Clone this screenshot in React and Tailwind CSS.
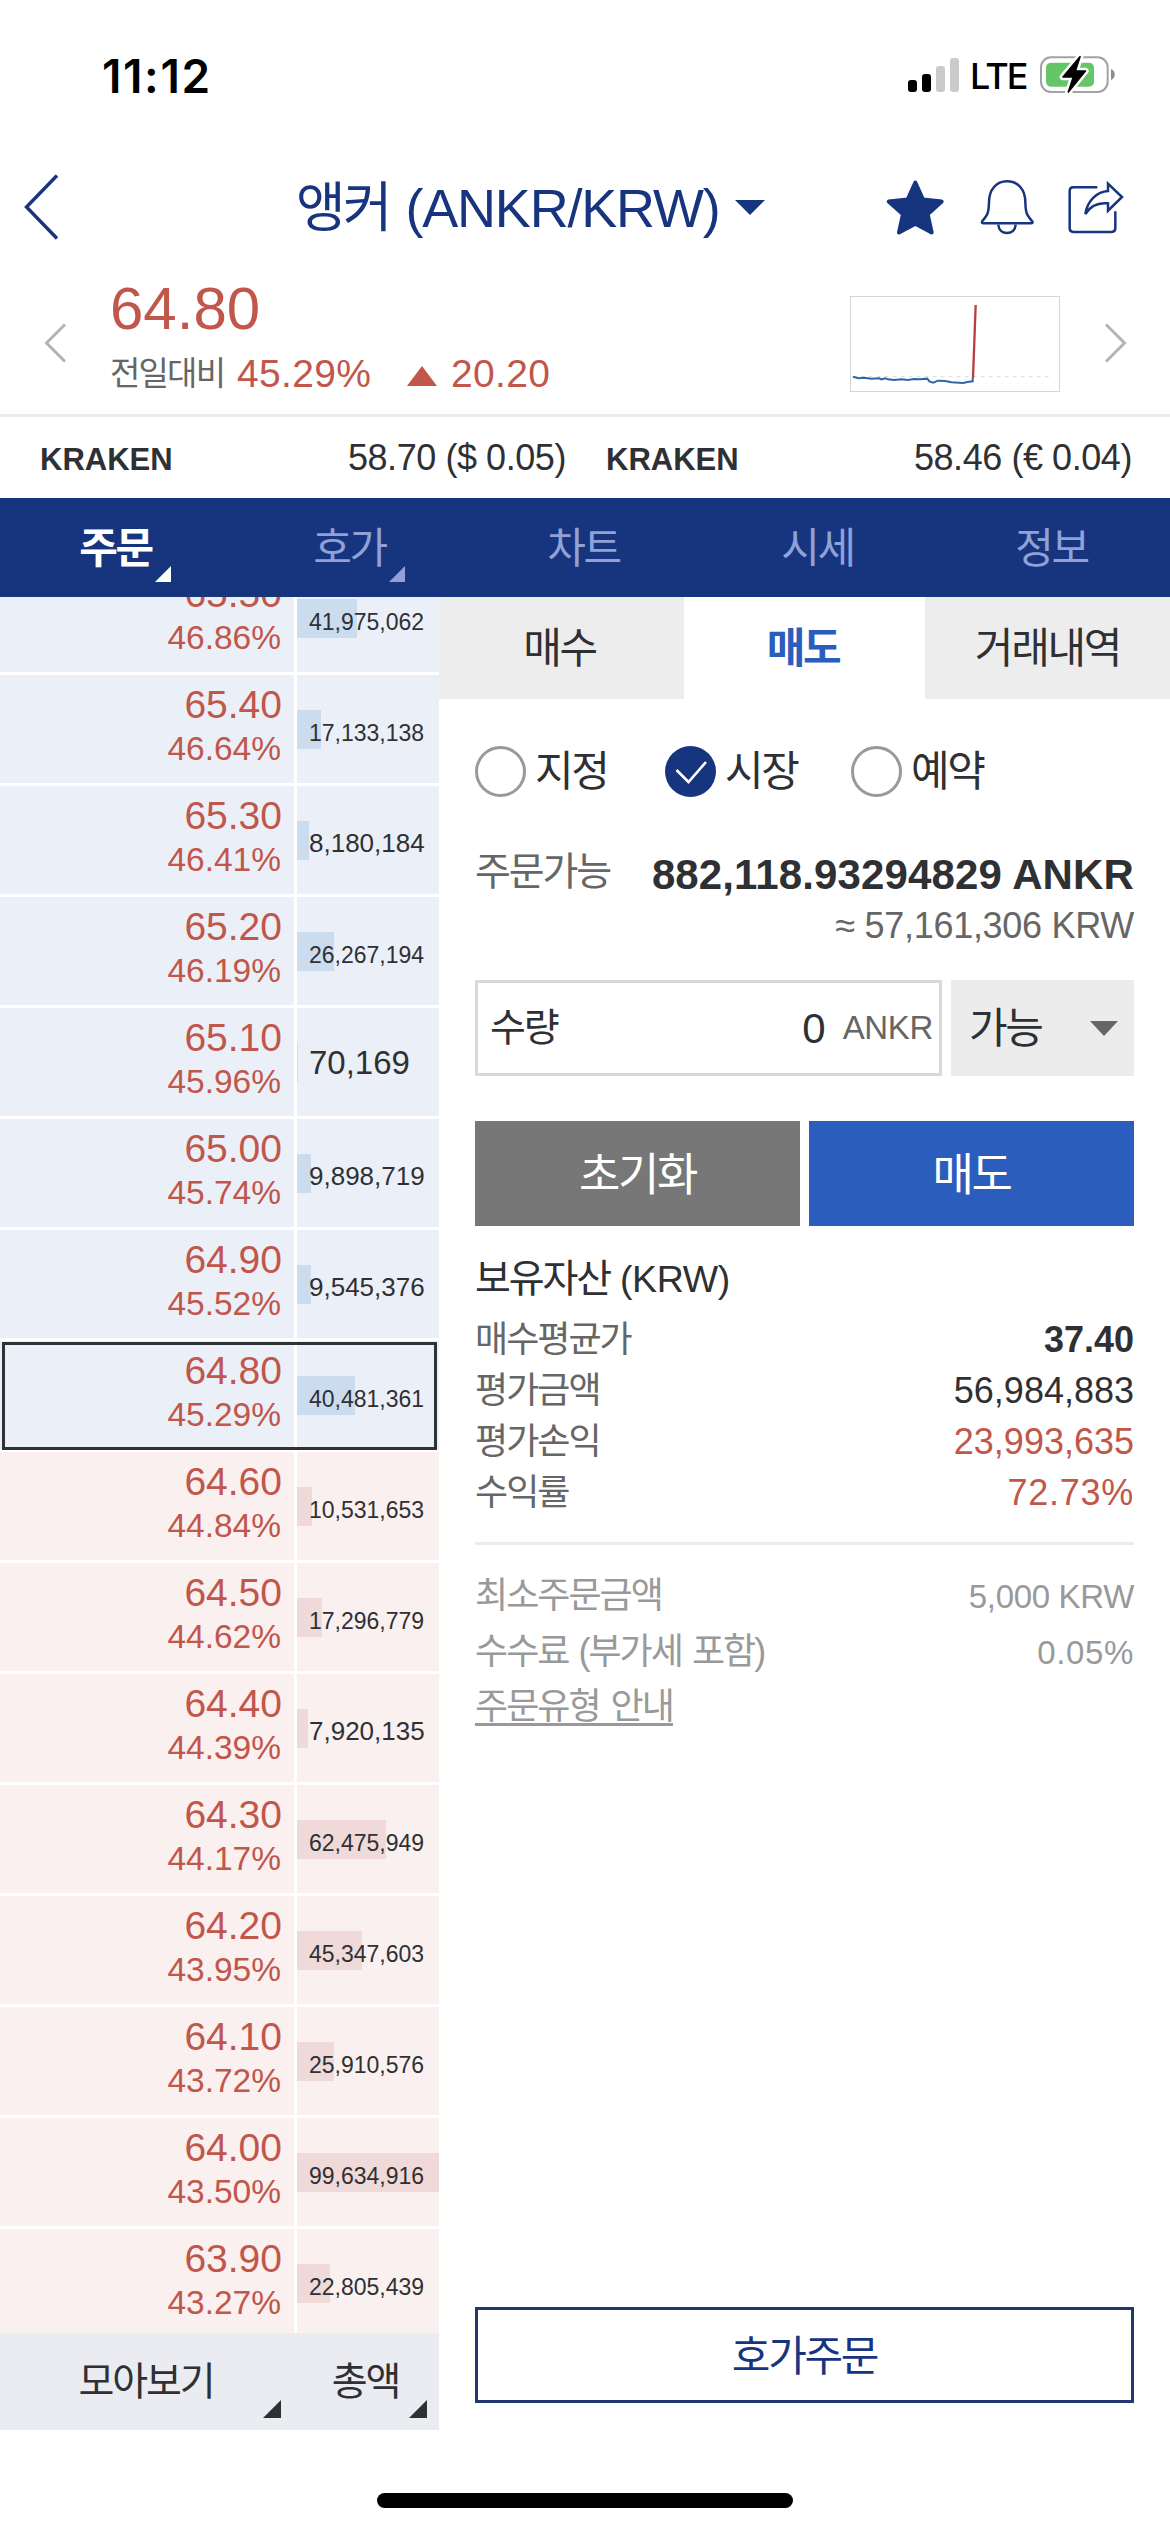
import React from 'react';
import clsx from 'clsx';

const MAX_VOLUME = 99634916;

const orders = [
  { price: '65.50', rate: '46.86%', volume: 41975062, side: 'ask' },
  { price: '65.40', rate: '46.64%', volume: 17133138, side: 'ask' },
  { price: '65.30', rate: '46.41%', volume: 8180184, side: 'ask' },
  { price: '65.20', rate: '46.19%', volume: 26267194, side: 'ask' },
  { price: '65.10', rate: '45.96%', volume: 70169, side: 'ask' },
  { price: '65.00', rate: '45.74%', volume: 9898719, side: 'ask' },
  { price: '64.90', rate: '45.52%', volume: 9545376, side: 'ask' },
  { price: '64.80', rate: '45.29%', volume: 40481361, side: 'ask', current: true },
  { price: '64.60', rate: '44.84%', volume: 10531653, side: 'bid' },
  { price: '64.50', rate: '44.62%', volume: 17296779, side: 'bid' },
  { price: '64.40', rate: '44.39%', volume: 7920135, side: 'bid' },
  { price: '64.30', rate: '44.17%', volume: 62475949, side: 'bid' },
  { price: '64.20', rate: '43.95%', volume: 45347603, side: 'bid' },
  { price: '64.10', rate: '43.72%', volume: 25910576, side: 'bid' },
  { price: '64.00', rate: '43.50%', volume: 99634916, side: 'bid' },
  { price: '63.90', rate: '43.27%', volume: 22805439, side: 'bid' },
];

const navTabs = [
  { label: '주문', active: true, menu: true },
  { label: '호가', menu: true },
  { label: '차트' },
  { label: '시세' },
  { label: '정보' },
];

const assets = [
  { label: '매수평균가', value: '37.40', style: 'font-bold' },
  { label: '평가금액', value: '56,984,883', style: '' },
  { label: '평가손익', value: '23,993,635', style: 'text-[#c1564b]' },
  { label: '수익률', value: '72.73%', style: 'text-[#c1564b] tracking-[0.02em]' },
];

// Hangul is set a little tighter than the latin text
const Ko = ({ className, children }) => (
  <span className={clsx('tracking-[-0.055em]', className)}>{children}</span>
);

const Corner = ({ className }) => (
  <svg viewBox="0 0 18 18" className={clsx('absolute', className)} fill="currentColor">
    <path d="M18 0V18H0Z" />
  </svg>
);

const StatusBar = () => (
  <div className="flex h-[144px] items-center pt-1 pr-[54px] pl-[102px] font-[Inter,sans-serif] text-black">
    <span className="mt-1 text-[46px] font-semibold tracking-[0.035em]">11:12</span>
    <svg viewBox="0 0 51 34" className="mt-px ml-auto h-[34px] w-[51px]">
      <rect x="0" y="22" width="9" height="12" rx="3" />
      <rect x="14" y="16" width="9" height="18" rx="3" />
      <rect x="28" y="8" width="9" height="26" rx="3" fill="#cacaca" />
      <rect x="42" y="0" width="9" height="34" rx="3" fill="#cacaca" />
    </svg>
    <span className="mt-1 ml-[11px] w-[57px] text-[36px] font-medium tracking-[-0.05em]">LTE</span>
    <svg viewBox="597 73 231 117" className="ml-3 h-[39px] w-[77px]">
      <rect x="603" y="80" width="200" height="104" rx="30" fill="none" stroke="#a2a2a2" strokeWidth="6" />
      <path d="M813 115C828 120 828 143 813 148Z" fill="#8c8c8c" />
      <rect x="618" y="96" width="144" height="72" rx="15" fill="#65c667" />
      <path d="M720 78L669 139H700L685 184L736 121H706Z" fill="#fff" stroke="#fff" strokeWidth="20" strokeLinejoin="round" />
      <path d="M720 78L669 139H700L685 184L736 121H706Z" stroke="#000" strokeWidth="5" strokeLinejoin="round" />
    </svg>
  </div>
);

const Header = () => (
  <div className="flex h-[126px] items-center pr-[46px] text-[#17347f]">
    <svg viewBox="0 0 36 66" className="ml-[23px] h-[66px] w-[36px]" fill="none" stroke="currentColor" strokeWidth="3.4">
      <path d="M34 1.500L3.500 33L34 64.500" />
    </svg>
    <div className="mt-[2px] ml-[237px] flex w-[425px] items-baseline text-[54px] leading-[60px] whitespace-nowrap">
      <Ko>앵커</Ko>
      <span className="ml-[16px] tracking-[-1.200px]">(ANKR/KRW)</span>
    </div>
    <svg viewBox="0 0 30 15" className="ml-[14px] h-[15px] w-[30px]" fill="currentColor">
      <path d="M0 0H30L15 15Z" />
    </svg>
    <svg viewBox="130 440 180 170" className="ml-auto h-[57px] w-[60px]" fill="currentColor" stroke="currentColor" strokeWidth="12" strokeLinejoin="round">
      <path d="M221 450L244 501L300 507L258 545L270 600L221 574L172 600L184 545L141 507L198 501Z" />
    </svg>
    <svg viewBox="416 445 162 168" className="ml-[35px] h-[56px] w-[54px]" fill="none" stroke="currentColor" strokeWidth="7.5" strokeLinejoin="round">
      <path d="M423 571C440 552 442 545 443 515C443 476 465 452 497 452C530 452 552 476 552 515C553 545 555 552 572 571Q577 578 568 578H427Q419 578 423 571Z" />
      <path d="M471 582C472 599 484 607 497 607C510 607 522 599 523 582" />
    </svg>
    <svg viewBox="682 449 168 162" className="ml-[34px] h-[54px] w-[56px]" fill="none" stroke="currentColor" strokeWidth="7.5">
      <path d="M770 471H698Q687 471 687 482V594Q687 605 698 605H813Q824 605 824 594V543" />
      <path d="M802 460L844 500L802 541V519C775 516 750 525 734 551C740 510 770 484 802 482Z" />
    </svg>
  </div>
);

const PriceSummary = () => (
  <div className="flex h-[147px] items-start border-b-[3px] border-[#ebebeb] text-[#c1564b]">
    <svg viewBox="0 0 22 40" className="mt-[53px] ml-[44px] h-[40px] w-[22px]" fill="none" stroke="#b3b3b3" strokeWidth="3">
      <path d="M21 1.500L2.500 20L21 38.500" />
    </svg>
    <div className="ml-[44px] flex flex-col">
      <span className="mt-[9px] text-[60px] leading-[60px]">64.80</span>
      <div className="mt-[10px] flex items-center text-[39px] leading-[50px] tracking-[0.008em]">
        <Ko className="w-[127px] text-[33px] text-[#666]">전일대비</Ko>
        <span className="w-[170px]">45.29%</span>
        <svg viewBox="0 0 30 20" className="mt-1 h-5 w-[30px]" fill="currentColor">
          <path d="M15 0L30 20H0Z" />
        </svg>
        <span className="ml-[14px]">20.20</span>
      </div>
    </div>
    <svg viewBox="58 48 630 288" className="mt-[26px] ml-auto h-[96px] w-[210px]" fill="none">
      <rect x="59.5" y="49.5" width="627" height="285" stroke="#d6d6d6" strokeWidth="3" />
      <path d="M66 290H664" stroke="#dcdcdc" strokeWidth="3" strokeDasharray="12 12" />
      <path d="M67 290L84 295L100 293L122 296L146 295L152 298L164 295L172 298L190 300L212 298L232 300L250 297L268 298L290 296L296 304L308 308L322 302L344 303L362 307L398 309L410 306L426 304V294" stroke="#2f66a8" strokeWidth="6" />
      <path d="M427 294L435 75" stroke="#b93f42" strokeWidth="7" />
    </svg>
    <svg viewBox="0 0 22 40" className="mt-[53px] mr-[43px] ml-[45px] h-[40px] w-[22px]" fill="none" stroke="#b3b3b3" strokeWidth="3">
      <path d="M1 1.500L19.500 20L1 38.500" />
    </svg>
  </div>
);

const Ticker = ({ value }) => (
  <div className="flex items-baseline justify-between">
    <span className="text-[31px] font-bold">KRAKEN</span>
    <span className="text-[36px] tracking-[-0.012em]">{value}</span>
  </div>
);

const Nav = () => (
  <div className="grid h-[99px] grid-cols-5 bg-[#17347f] text-[42px]">
    {navTabs.map(tab => (
      <div
        key={tab.label}
        className={clsx('relative flex items-center justify-center pt-[2px] pr-[3px]', tab.active ? 'font-bold text-white' : 'text-[#8fa1d6]')}
      >
        <Ko>{tab.label}</Ko>
        {tab.menu && <Corner className="right-[63px] bottom-[15px] h-[16px] w-[16px]" />}
      </div>
    ))}
  </div>
);

const OrderRow = ({ order }) => {
  const ask = order.side === 'ask';
  const digits = String(order.volume).length;

  return (
    <div className="relative flex h-[111px] shrink-0 gap-[3px] pb-[3px]">
      <div className={clsx('w-[294px] pt-[10px] pr-3 text-right text-[#c1564b]', ask ? 'bg-[#ebf0f8]' : 'bg-[#f9f0ef]')}>
        <div className="text-[39px] leading-[40px]">{order.price}</div>
        <div className="mt-[3px] pr-px text-[33.5px] leading-[42px]">{order.rate}</div>
      </div>
      <div className={clsx('flex-1 pt-[35px]', ask ? 'bg-[#ebf0f8]' : 'bg-[#f9f0ef]')}>
        <div className="relative h-[39px] pl-3 text-[33px] leading-[39px]">
          <div
            className={clsx('absolute top-0 left-0 h-[39px]', ask ? 'bg-[#ccdcef]' : 'bg-[#efd9d9]')}
            style={{ width: `${(order.volume / MAX_VOLUME) * 100}%` }}
          />
          <span className={clsx('relative', digits === 8 && 'text-[23px]', digits === 7 && 'text-[26px]')}>
            {order.volume.toLocaleString('en-US')}
          </span>
        </div>
      </div>
      {order.current && <div className="absolute top-px left-[2px] h-[108px] w-[435px] border-[3px] border-[#2f3237]" />}
    </div>
  );
};

const OrderBook = () => (
  <div className="flex w-[439px] flex-col">
    <div className="flex h-[1736px] flex-col overflow-hidden">
      <div className="-mt-[33px] flex flex-col">
        {orders.map(order => (
          <OrderRow key={order.price} order={order} />
        ))}
      </div>
    </div>
    <div className="flex h-[97px] bg-[#ebecf2] text-[39px]">
      <div className="relative flex w-[292px] items-center justify-center pt-[2px]">
        <Ko>모아보기</Ko>
        <Corner className="right-[11px] bottom-3 h-[18px] w-[18px]" />
      </div>
      <div className="relative flex flex-1 items-center justify-center pt-[2px]">
        <Ko>총액</Ko>
        <Corner className="right-3 bottom-3 h-[18px] w-[18px]" />
      </div>
    </div>
  </div>
);

const Radio = ({ label, checked }) => (
  <div className="flex h-[51px] items-center leading-[51px]">
    {checked ? (
      <svg viewBox="0 0 51 51" className="h-[51px] w-[51px]">
        <circle cx="25.5" cy="25.5" r="25.5" fill="#17347f" />
        <path d="M11.500 24L23.500 36L41 16" fill="none" stroke="#fff" strokeWidth="2.6" />
      </svg>
    ) : (
      <div className="h-[51px] w-[51px] rounded-full border-[3px] border-[#999]" />
    )}
    <Ko className="ml-[9px]">{label}</Ko>
  </div>
);

const OrderForm = () => (
  <div className="flex flex-1 flex-col">
    <div className="flex h-[102px] text-[42px]">
      <div className="flex w-[245px] items-center justify-center bg-[#ededed] pr-[4px]"><Ko>매수</Ko></div>
      <div className="flex flex-1 items-center justify-center pr-[3px] font-bold text-[#2b5dbd]"><Ko>매도</Ko></div>
      <div className="flex w-[245px] items-center justify-center bg-[#ededed]"><Ko>거래내역</Ko></div>
    </div>

    <div className="flex flex-1 flex-col pr-9 pl-9">
      <div className="mt-[47px] flex h-[51px] text-[42px]">
        <div className="w-[190px]"><Radio label="지정" /></div>
        <div className="w-[186px]"><Radio label="시장" checked /></div>
        <Radio label="예약" />
      </div>

      <div className="mt-[52px] flex h-[51px] justify-between">
        <Ko className="text-[39px] leading-[45px] text-[#666]">주문가능</Ko>
        <span className="text-[42px] leading-[51px] font-bold tracking-[0.003em]">882,118.93294829 ANKR</span>
      </div>
      <div className="h-[51px] text-right text-[36px] leading-[51px] tracking-[-0.008em] text-[#666]">≈ 57,161,306 KRW</div>

      <div className="mt-[29px] flex h-[96px] gap-[9px]">
        <div className="flex w-[467px] items-center border-[3px] border-[#d9d9d9] pr-[6px] pl-[12px]">
          <Ko className="text-[39px]">수량</Ko>
          <span className="ml-auto text-[42px]">0</span>
          <span className="ml-[17px] text-[33px] tracking-[-0.01em] text-[#666]">ANKR</span>
        </div>
        <div className="flex flex-1 items-center justify-between bg-[#ececec] pr-[16px] pl-[18px] text-[42px]">
          <Ko>가능</Ko>
          <svg viewBox="0 0 28 15" className="h-[15px] w-[28px]" fill="#666">
            <path d="M0 0H28L14 15Z" />
          </svg>
        </div>
      </div>

      <div className="mt-[45px] grid h-[105px] grid-cols-2 gap-[9px] text-[45px] text-white">
        <div className="flex items-center justify-center bg-[#777] pt-1"><Ko>초기화</Ko></div>
        <div className="flex items-center justify-center bg-[#2b5dbd] pt-1"><Ko>매도</Ko></div>
      </div>

      <div className="mt-[28px] flex h-[50px] items-baseline text-[39px] leading-[50px]">
        <Ko>보유자산</Ko>
        <span className="ml-[10px] text-[37.5px] tracking-[-0.01em]">(KRW)</span>
      </div>
      <div className="mt-[10px]">
        {assets.map(item => (
          <div key={item.label} className="flex h-[51px] justify-between text-[36px] leading-[52px]">
            <Ko className="text-[#666]">{item.label}</Ko>
            <span className={item.style}>{item.value}</span>
          </div>
        ))}
      </div>

      <div className="mt-[24px] h-[3px] bg-[#ececec]" />

      <div className="mt-[24px] text-[33px] leading-[54.5px] text-[#999]">
        <div className="flex items-baseline justify-between">
          <Ko className="text-[36px]">최소주문금액</Ko>
          <span className="tracking-[-0.01em]">5,000 KRW</span>
        </div>
        <div className="flex items-baseline justify-between">
          <Ko className="text-[36px] [word-spacing:2px]">수수료 (부가세 포함)</Ko>
          <span className="tracking-[0.02em]">0.05%</span>
        </div>
        <Ko className="inline-block h-[46px] border-b-[3px] border-[#999] text-[36px] [word-spacing:3px]">주문유형 안내</Ko>
      </div>

      <div className="mt-auto mb-[27px] flex h-[96px] items-center justify-center border-[3px] border-[#22376f] pt-[2px] text-[42px] text-[#17347f]">
        <Ko>호가주문</Ko>
      </div>
    </div>
  </div>
);

const App = () => (
  <div className="flex h-[2532px] w-[1170px] flex-col overflow-hidden bg-white font-['Liberation_Sans','Noto_Sans_CJK_KR',sans-serif] text-[#2f3033]">
    <StatusBar />
    <Header />
    <PriceSummary />
    <div className="grid h-[81px] grid-cols-2 gap-[40px] pr-[38px] pl-[40px] leading-[81px]">
      <Ticker value="58.70 ($ 0.05)" />
      <Ticker value="58.46 (€ 0.04)" />
    </div>
    <Nav />
    <div className="flex h-[1833px]">
      <OrderBook />
      <OrderForm />
    </div>
    <div className="mx-auto mt-[63px] h-[15px] w-[416px] rounded-full bg-black" />
  </div>
);

export default App;
